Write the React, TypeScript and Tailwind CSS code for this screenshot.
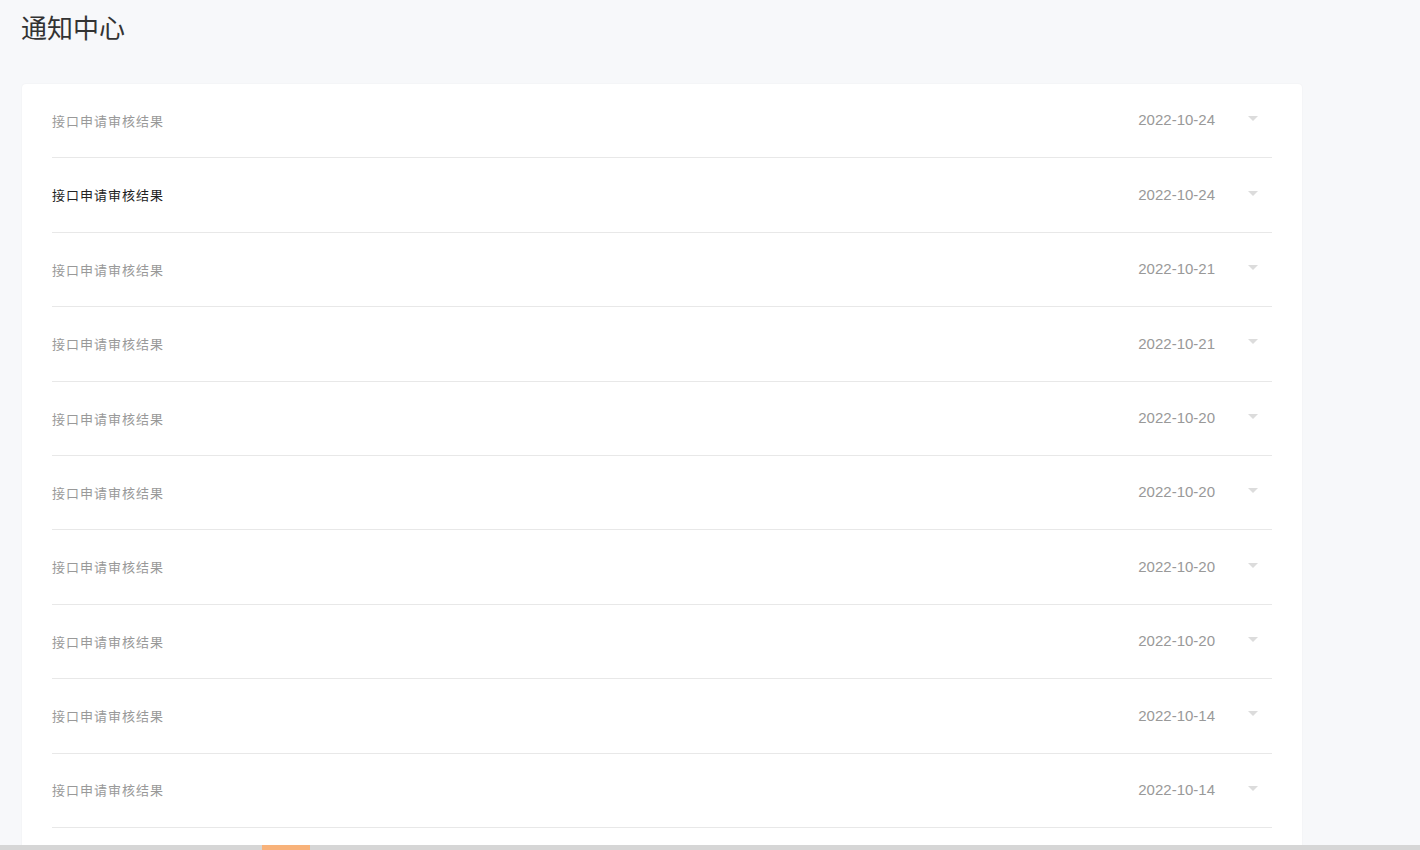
const ITEMS = [
  { title: '接口申请审核结果', date: '2022-10-24' },
  { title: '接口申请审核结果', date: '2022-10-24', active: true },
  { title: '接口申请审核结果', date: '2022-10-21' },
  { title: '接口申请审核结果', date: '2022-10-21' },
  { title: '接口申请审核结果', date: '2022-10-20' },
  { title: '接口申请审核结果', date: '2022-10-20' },
  { title: '接口申请审核结果', date: '2022-10-20' },
  { title: '接口申请审核结果', date: '2022-10-20' },
  { title: '接口申请审核结果', date: '2022-10-14' },
  { title: '接口申请审核结果', date: '2022-10-14' },
]

export default function App() {
  return (
    <div className="min-h-screen bg-[#f7f8fa] font-['Liberation_Sans','Noto_Sans_CJK_SC',sans-serif]">
      <div className="h-[850px] overflow-hidden">
        {/* Page title */}
        <h1 className="pl-[21px] pt-[9px] h-[84px] text-[26px] leading-[36px] text-[#333] font-['Noto_Sans_CJK_SC',sans-serif]">
          通知中心
        </h1>

        {/* Notification list */}
        <div className="ml-[22px] w-[1280px] bg-white rounded-[4px] shadow-[0_0_2px_rgba(0,0,0,0.06)] px-[30px] pb-[60px]">
          {ITEMS.map((item, i) => (
            <div
              key={i}
              className="h-[74.4px] box-border border-b border-[#e8e8e8] flex items-center cursor-pointer"
            >
              <span
                className={`text-[13px] font-['Noto_Sans_CJK_SC',sans-serif] tracking-[1px] ${
                  item.active ? 'text-[#222]' : 'text-[#999]'
                }`}
              >
                {item.title}
              </span>
              <span className="ml-auto text-[15px] text-[#999]">{item.date}</span>
              <svg width="10" height="5" viewBox="0 0 10 5" className="ml-[33px] mr-[14px] -mt-[4px]">
                <path d="M0 0h10L5 5z" fill="#dcdcdc" />
              </svg>
            </div>
          ))}
        </div>
      </div>

      {/* Horizontal scrollbar strip */}
      <div className="fixed left-0 right-0 bottom-0 h-[5px] bg-[#d6d6d6]">
        <div className="absolute left-[262px] top-0 h-[5px] w-[48px] bg-[#f8b27a]" />
      </div>
    </div>
  )
}
